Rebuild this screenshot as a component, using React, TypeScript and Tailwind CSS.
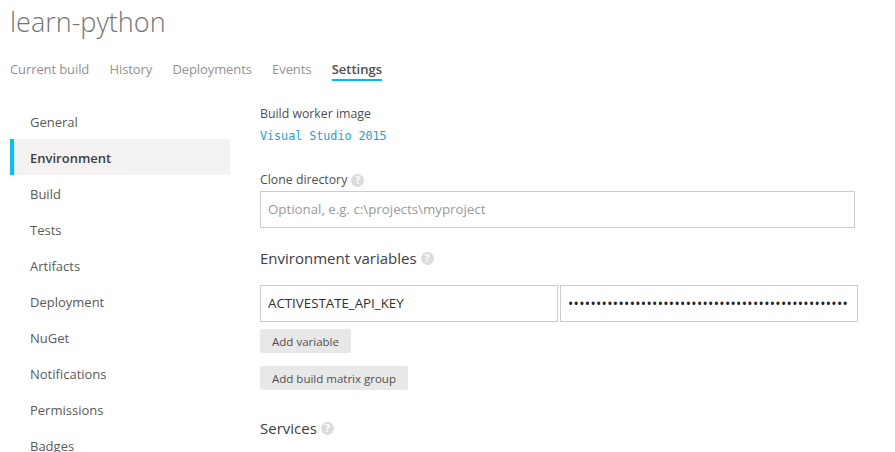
const sideItems = ['General', 'Environment', 'Build', 'Tests', 'Artifacts', 'Deployment', 'NuGet', 'Notifications', 'Permissions', 'Badges'];
const tabs = ['Current build', 'History', 'Deployments', 'Events', 'Settings'];

function Help() {
  return (
    <span className="inline-flex h-[13px] w-[13px] items-center justify-center rounded-full bg-[#dcdcdc] text-[10px] font-bold leading-none text-white">
      ?
    </span>
  );
}

export default function App() {
  return (
    <div className="h-[452px] w-[895px] overflow-hidden bg-white font-['Open_Sans',sans-serif] text-[13px] text-[#505050]">
      <h1 className="h-[45px] pl-[10px] pt-[1px] text-[27px] font-light leading-[42px] text-[#757575]">learn-python</h1>

      <div className="mt-[14px] flex h-[22px] gap-[20.3px] pl-[10px]">
        {tabs.map((tab) => (
          <div
            key={tab}
            className={
              tab === 'Settings'
                ? 'h-[22px] border-b-2 border-[#00b9f2] font-semibold leading-[20px] text-[#505050]'
                : 'h-[22px] leading-[20px] tracking-[-0.1px] text-[#929292]'
            }
          >
            {tab}
          </div>
        ))}
      </div>

      <div className="flex pl-[10px] pt-[22px]">
        <div className="w-[220px] shrink-0">
          {sideItems.map((item) =>
            item === 'Environment' ? (
              <div key={item} className="flex h-[36px] items-center border-l-4 border-[#00c3f7] bg-[#f3f2f1] pl-[16px] pt-[4px] font-semibold text-[#404040]">
                {item}
              </div>
            ) : (
              <div key={item} className="flex h-[36px] items-center pl-[20px] pt-[4px] text-[#5a5a5a]">
                {item}
              </div>
            ),
          )}
        </div>

        <div className="ml-[30px] w-[600px] pt-[2px]">
          <div className="h-[18px] text-[12.3px] leading-[18px]">Build worker image</div>
          <div className="mt-[5px] h-[16px] font-['DejaVu_Sans_Mono',monospace] text-[11.7px] leading-[16px] text-[#1ba1d8]">Visual Studio 2015</div>

          <div className="mt-[27px] flex h-[18px] items-center gap-[4px] text-[12.3px] leading-[18px]">
            Clone directory <Help />
          </div>
          <input
            readOnly
            placeholder="Optional, e.g. c:\projects\myproject"
            className="mt-[2px] block h-[37px] w-[595px] border border-[#cccccc] px-[7px] pb-[1px] text-[13.3px] outline-none placeholder:text-[#9a9a9a]"
          />

          <div className="mt-[19px] flex h-[22px] items-center gap-[4px] text-[15px] leading-[22px] text-[#404040]">
            Environment variables <Help />
          </div>
          <div className="mt-[16px] flex gap-[2px]">
            <input
              readOnly
              value="ACTIVESTATE_API_KEY"
              className="block h-[37px] w-[298px] border border-[#cccccc] px-[7px] pb-[1px] text-[13.3px] text-[#303030] outline-none"
            />
            <input
              readOnly
              type="password"
              value="abcdefghijklmnopqrstuvwxyzabcdefghijklmnopqrstuvwxyzabcdefghijklmnopqrstuvwxyz"
              className="block h-[37px] w-[298px] border border-[#cccccc] pl-[7px] pr-[8px] text-[14px] tracking-[0.34px] text-[#202020] outline-none"
            />
          </div>
          <button className="mt-[7px] block h-[24px] w-[91px] rounded-[2px] bg-[#e8e8e8] pt-[1px] text-[11.5px] text-[#505050]">Add variable</button>
          <button className="mt-[13px] block h-[24px] w-[148px] rounded-[2px] bg-[#e8e8e8] pt-[1px] text-[11.5px] text-[#505050]">Add build matrix group</button>

          <div className="mt-[27px] flex h-[22px] items-center gap-[4px] text-[15px] leading-[22px] text-[#404040]">
            Services <Help />
          </div>
        </div>
      </div>
    </div>
  );
}
